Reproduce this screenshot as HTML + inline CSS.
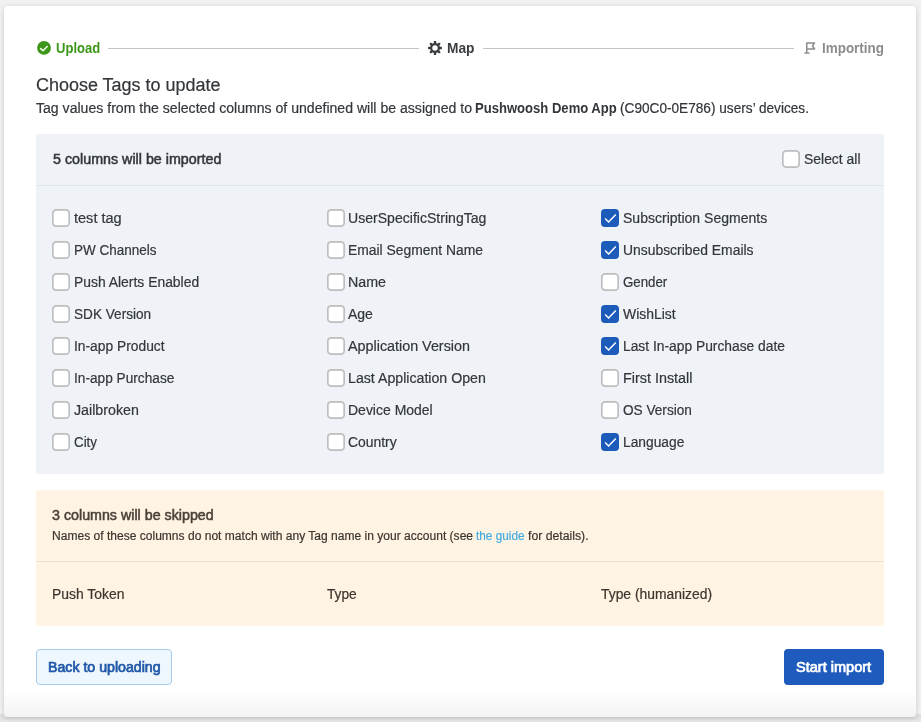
<!DOCTYPE html>
<html>
<head>
<meta charset="utf-8">
<title>Import</title>
<style>
*{box-sizing:border-box;margin:0;padding:0}
html,body{width:921px;height:722px;overflow:hidden;background:#f1f1f1;font-family:"Liberation Sans",sans-serif;color:#33363a;font-size:14px}
.shadow{position:absolute;left:0;top:714px;width:921px;height:8px;background:linear-gradient(to bottom,#e0e0e0 3px,#e9e9e9 8px)}
.card{position:absolute;left:4px;top:6px;width:912px;height:711px;background:linear-gradient(to bottom,#fff 0,#fff 684px,#f3f3f3 711px);border-radius:4px;box-shadow:0 1px 5px rgba(0,0,0,.17)}
#root{position:absolute;left:0;top:0;width:921px;height:722px;will-change:transform}
.abs{position:absolute;white-space:nowrap}
.t{position:absolute;white-space:nowrap;font-size:14px;line-height:16px;height:16px;transform-origin:0 0}
.t{-webkit-text-stroke:.2px}
.m{-webkit-text-stroke:.5px}
.sb{-webkit-text-stroke:.7px}
.b{font-weight:bold;-webkit-text-stroke:0}
.f18{font-size:18px;line-height:20px;height:20px}
.f12{font-size:12px}
.line{position:absolute;height:1px;background:#c4c4c4;top:48px}
.panel{position:absolute;left:36px;width:848px;border-radius:3px}
.p1{top:134px;height:340px;background:#eff3f7}
.p2{top:490px;height:136px;background:#fff4e3}
.div{position:absolute;left:36px;width:848px;height:1px}
.btn{position:absolute;top:649px;height:36px;border-radius:4px}
</style>
</head>
<body>
<div class="shadow"></div>
<div id="root">
<div class="card"></div>

<!-- steps -->
<svg class="abs" style="left:37px;top:41px" width="14" height="14" viewBox="0 0 14 14"><circle cx="7" cy="6.9" r="6.9" fill="#3c9718"/><path d="M3.6 7.7l2.4 2 4.2-4.2" fill="none" stroke="#f1faec" stroke-width="1.6" stroke-linecap="round" stroke-linejoin="round"/></svg>
<span class="t b" style="left:56.00px;top:40px;transform:scaleX(0.9312);color:#3c9718">Upload</span>
<div class="line" style="left:108px;width:311px"></div>
<svg class="abs" style="left:427px;top:40px" width="16" height="16" viewBox="0 0 16 16"><g fill="#3a3d40"><circle cx="8" cy="8" r="3.75" fill="none" stroke="#3a3d40" stroke-width="2.1"/><g transform="rotate(0 8 8)"><path d="M6.5 4L7 1.05h2L9.5 4z"/></g><g transform="rotate(45 8 8)"><path d="M6.5 4L7 1.05h2L9.5 4z"/></g><g transform="rotate(90 8 8)"><path d="M6.5 4L7 1.05h2L9.5 4z"/></g><g transform="rotate(135 8 8)"><path d="M6.5 4L7 1.05h2L9.5 4z"/></g><g transform="rotate(180 8 8)"><path d="M6.5 4L7 1.05h2L9.5 4z"/></g><g transform="rotate(225 8 8)"><path d="M6.5 4L7 1.05h2L9.5 4z"/></g><g transform="rotate(270 8 8)"><path d="M6.5 4L7 1.05h2L9.5 4z"/></g><g transform="rotate(315 8 8)"><path d="M6.5 4L7 1.05h2L9.5 4z"/></g></g></svg>
<span class="t b" style="left:447.08px;top:40px;transform:scaleX(0.9826);color:#3a3d40">Map</span>
<div class="line" style="left:483px;width:311px"></div>
<svg class="abs" style="left:803px;top:41px" width="14" height="14" viewBox="0 0 14 14"><path d="M3.75 12V1.95h7.8L9.5 5l2.05 3H3.75" fill="none" stroke="#8c8c8c" stroke-width="1.5" stroke-linejoin="round"/><path d="M1.4 12h5.1" stroke="#8c8c8c" stroke-width="1.5"/></svg>
<span class="t b" style="left:821.94px;top:40px;transform:scaleX(0.9600);color:#8c8c8c">Importing</span>

<!-- heading -->
<span class="t f18" style="left:36.00px;top:75px;transform:scaleX(0.9986)">Choose Tags to update</span>
<span class="t" style="left:36.00px;top:100px;transform:scaleX(1.0058)">Tag values from the selected columns of undefined will be assigned to</span>
<span class="t b" style="left:474.87px;top:100px;transform:scaleX(0.9331)">Pushwoosh Demo App</span>
<span class="t" style="left:620.27px;top:100px;transform:scaleX(0.9740)">(C90C0-0E786) users’ devices.</span>

<!-- panel 1 -->
<div class="panel p1"></div>
<div class="div" style="top:185px;background:#dfe6ec"></div>
<span class="t m" style="left:52.64px;top:151px;transform:scaleX(1.0207)">5 columns will be imported</span>
<svg class="abs" style="left:782.00px;top:150px" width="18" height="18" viewBox="0 0 18 18"><rect x="0.8" y="0.8" width="16.4" height="16.4" rx="3.4" fill="#fff" stroke="#bcbebf" stroke-width="1.7"/></svg>
<span class="t" style="left:803.60px;top:151px;transform:scaleX(0.9946)">Select all</span>
<svg class="abs" style="left:52.00px;top:209px" width="18" height="18" viewBox="0 0 18 18"><rect x="0.8" y="0.8" width="16.4" height="16.4" rx="3.4" fill="#fff" stroke="#bcbebf" stroke-width="1.7"/></svg>
<span class="t" style="left:73.90px;top:210px;transform:scaleX(1.0378)">test tag</span>
<svg class="abs" style="left:52.00px;top:241px" width="18" height="18" viewBox="0 0 18 18"><rect x="0.8" y="0.8" width="16.4" height="16.4" rx="3.4" fill="#fff" stroke="#bcbebf" stroke-width="1.7"/></svg>
<span class="t" style="left:73.90px;top:242px;transform:scaleX(0.9630)">PW Channels</span>
<svg class="abs" style="left:52.00px;top:273px" width="18" height="18" viewBox="0 0 18 18"><rect x="0.8" y="0.8" width="16.4" height="16.4" rx="3.4" fill="#fff" stroke="#bcbebf" stroke-width="1.7"/></svg>
<span class="t" style="left:73.90px;top:274px;transform:scaleX(0.9924)">Push Alerts Enabled</span>
<svg class="abs" style="left:52.00px;top:305px" width="18" height="18" viewBox="0 0 18 18"><rect x="0.8" y="0.8" width="16.4" height="16.4" rx="3.4" fill="#fff" stroke="#bcbebf" stroke-width="1.7"/></svg>
<span class="t" style="left:73.90px;top:306px;transform:scaleX(0.9720)">SDK Version</span>
<svg class="abs" style="left:52.00px;top:337px" width="18" height="18" viewBox="0 0 18 18"><rect x="0.8" y="0.8" width="16.4" height="16.4" rx="3.4" fill="#fff" stroke="#bcbebf" stroke-width="1.7"/></svg>
<span class="t" style="left:73.90px;top:338px;transform:scaleX(0.9864)">In-app Product</span>
<svg class="abs" style="left:52.00px;top:369px" width="18" height="18" viewBox="0 0 18 18"><rect x="0.8" y="0.8" width="16.4" height="16.4" rx="3.4" fill="#fff" stroke="#bcbebf" stroke-width="1.7"/></svg>
<span class="t" style="left:73.90px;top:370px;transform:scaleX(0.9770)">In-app Purchase</span>
<svg class="abs" style="left:52.00px;top:401px" width="18" height="18" viewBox="0 0 18 18"><rect x="0.8" y="0.8" width="16.4" height="16.4" rx="3.4" fill="#fff" stroke="#bcbebf" stroke-width="1.7"/></svg>
<span class="t" style="left:73.90px;top:402px;transform:scaleX(1.0159)">Jailbroken</span>
<svg class="abs" style="left:52.00px;top:433px" width="18" height="18" viewBox="0 0 18 18"><rect x="0.8" y="0.8" width="16.4" height="16.4" rx="3.4" fill="#fff" stroke="#bcbebf" stroke-width="1.7"/></svg>
<span class="t" style="left:73.90px;top:434px;transform:scaleX(0.9526)">City</span>
<svg class="abs" style="left:327.00px;top:209px" width="18" height="18" viewBox="0 0 18 18"><rect x="0.8" y="0.8" width="16.4" height="16.4" rx="3.4" fill="#fff" stroke="#bcbebf" stroke-width="1.7"/></svg>
<span class="t" style="left:347.90px;top:210px;transform:scaleX(1.0051)">UserSpecificStringTag</span>
<svg class="abs" style="left:327.00px;top:241px" width="18" height="18" viewBox="0 0 18 18"><rect x="0.8" y="0.8" width="16.4" height="16.4" rx="3.4" fill="#fff" stroke="#bcbebf" stroke-width="1.7"/></svg>
<span class="t" style="left:347.90px;top:242px;transform:scaleX(0.9908)">Email Segment Name</span>
<svg class="abs" style="left:327.00px;top:273px" width="18" height="18" viewBox="0 0 18 18"><rect x="0.8" y="0.8" width="16.4" height="16.4" rx="3.4" fill="#fff" stroke="#bcbebf" stroke-width="1.7"/></svg>
<span class="t" style="left:347.90px;top:274px;transform:scaleX(1.0177)">Name</span>
<svg class="abs" style="left:327.00px;top:305px" width="18" height="18" viewBox="0 0 18 18"><rect x="0.8" y="0.8" width="16.4" height="16.4" rx="3.4" fill="#fff" stroke="#bcbebf" stroke-width="1.7"/></svg>
<span class="t" style="left:347.90px;top:306px;transform:scaleX(1.0000)">Age</span>
<svg class="abs" style="left:327.00px;top:337px" width="18" height="18" viewBox="0 0 18 18"><rect x="0.8" y="0.8" width="16.4" height="16.4" rx="3.4" fill="#fff" stroke="#bcbebf" stroke-width="1.7"/></svg>
<span class="t" style="left:347.90px;top:338px;transform:scaleX(1.0241)">Application Version</span>
<svg class="abs" style="left:327.00px;top:369px" width="18" height="18" viewBox="0 0 18 18"><rect x="0.8" y="0.8" width="16.4" height="16.4" rx="3.4" fill="#fff" stroke="#bcbebf" stroke-width="1.7"/></svg>
<span class="t" style="left:347.90px;top:370px;transform:scaleX(1.0118)">Last Application Open</span>
<svg class="abs" style="left:327.00px;top:401px" width="18" height="18" viewBox="0 0 18 18"><rect x="0.8" y="0.8" width="16.4" height="16.4" rx="3.4" fill="#fff" stroke="#bcbebf" stroke-width="1.7"/></svg>
<span class="t" style="left:347.90px;top:402px;transform:scaleX(0.9988)">Device Model</span>
<svg class="abs" style="left:327.00px;top:433px" width="18" height="18" viewBox="0 0 18 18"><rect x="0.8" y="0.8" width="16.4" height="16.4" rx="3.4" fill="#fff" stroke="#bcbebf" stroke-width="1.7"/></svg>
<span class="t" style="left:347.90px;top:434px;transform:scaleX(0.9918)">Country</span>
<svg class="abs" style="left:601.00px;top:209px" width="18" height="18" viewBox="0 0 18 18"><rect x="0" y="0" width="18" height="18" rx="4" fill="#1d5bba"/><path d="M4.1 9.6l3.5 3.5 7.2-7.6" fill="none" stroke="#fff" stroke-width="1.4"/></svg>
<span class="t" style="left:623.20px;top:210px;transform:scaleX(1.0014)">Subscription Segments</span>
<svg class="abs" style="left:601.00px;top:241px" width="18" height="18" viewBox="0 0 18 18"><rect x="0" y="0" width="18" height="18" rx="4" fill="#1d5bba"/><path d="M4.1 9.6l3.5 3.5 7.2-7.6" fill="none" stroke="#fff" stroke-width="1.4"/></svg>
<span class="t" style="left:623.20px;top:242px;transform:scaleX(0.9924)">Unsubscribed Emails</span>
<svg class="abs" style="left:601.00px;top:273px" width="18" height="18" viewBox="0 0 18 18"><rect x="0.8" y="0.8" width="16.4" height="16.4" rx="3.4" fill="#fff" stroke="#bcbebf" stroke-width="1.7"/></svg>
<span class="t" style="left:623.20px;top:274px;transform:scaleX(0.9484)">Gender</span>
<svg class="abs" style="left:601.00px;top:305px" width="18" height="18" viewBox="0 0 18 18"><rect x="0" y="0" width="18" height="18" rx="4" fill="#1d5bba"/><path d="M4.1 9.6l3.5 3.5 7.2-7.6" fill="none" stroke="#fff" stroke-width="1.4"/></svg>
<span class="t" style="left:623.20px;top:306px;transform:scaleX(0.9962)">WishList</span>
<svg class="abs" style="left:601.00px;top:337px" width="18" height="18" viewBox="0 0 18 18"><rect x="0" y="0" width="18" height="18" rx="4" fill="#1d5bba"/><path d="M4.1 9.6l3.5 3.5 7.2-7.6" fill="none" stroke="#fff" stroke-width="1.4"/></svg>
<span class="t" style="left:623.20px;top:338px;transform:scaleX(0.9863)">Last In-app Purchase date</span>
<svg class="abs" style="left:601.00px;top:369px" width="18" height="18" viewBox="0 0 18 18"><rect x="0.8" y="0.8" width="16.4" height="16.4" rx="3.4" fill="#fff" stroke="#bcbebf" stroke-width="1.7"/></svg>
<span class="t" style="left:623.20px;top:370px;transform:scaleX(1.0262)">First Install</span>
<svg class="abs" style="left:601.00px;top:401px" width="18" height="18" viewBox="0 0 18 18"><rect x="0.8" y="0.8" width="16.4" height="16.4" rx="3.4" fill="#fff" stroke="#bcbebf" stroke-width="1.7"/></svg>
<span class="t" style="left:623.20px;top:402px;transform:scaleX(0.9729)">OS Version</span>
<svg class="abs" style="left:601.00px;top:433px" width="18" height="18" viewBox="0 0 18 18"><rect x="0" y="0" width="18" height="18" rx="4" fill="#1d5bba"/><path d="M4.1 9.6l3.5 3.5 7.2-7.6" fill="none" stroke="#fff" stroke-width="1.4"/></svg>
<span class="t" style="left:623.20px;top:434px;transform:scaleX(0.9846)">Language</span>

<!-- panel 2 -->
<div class="panel p2"></div>
<div class="div" style="top:561px;background:#ede1d6"></div>
<span class="t m" style="left:52.05px;top:507px;transform:scaleX(1.0187);color:#4a4138">3 columns will be skipped</span>
<span class="t f12" style="left:52.00px;top:528px;transform:scaleX(1.0041);color:#3b352e">Names of these columns do not match with any Tag name in your account (see</span>
<span class="t f12" style="left:476.00px;top:528px;transform:scaleX(0.9837);color:#49abde">the guide</span>
<span class="t f12" style="left:528.10px;top:528px;transform:scaleX(1.0205);color:#3b352e">for details).</span>
<span class="t" style="left:52.00px;top:586px;transform:scaleX(0.9944);color:#3b352e">Push Token</span>
<span class="t" style="left:326.67px;top:586px;transform:scaleX(0.9792);color:#3b352e">Type</span>
<span class="t" style="left:601.33px;top:586px;transform:scaleX(0.9912);color:#3b352e">Type (humanized)</span>

<!-- buttons -->
<div class="btn" style="left:36px;width:136px;background:#eef7fd;border:1px solid #a7cdee"></div>
<span class="t sb" style="left:47.70px;top:659px;transform:scaleX(1.0113);color:#2158a8">Back to uploading</span>
<div class="btn" style="left:784px;width:100px;background:#1e5bbd"></div>
<span class="t sb" style="left:796.20px;top:659px;transform:scaleX(1.0386);color:#ffffff">Start import</span>
</div>
</body>
</html>
